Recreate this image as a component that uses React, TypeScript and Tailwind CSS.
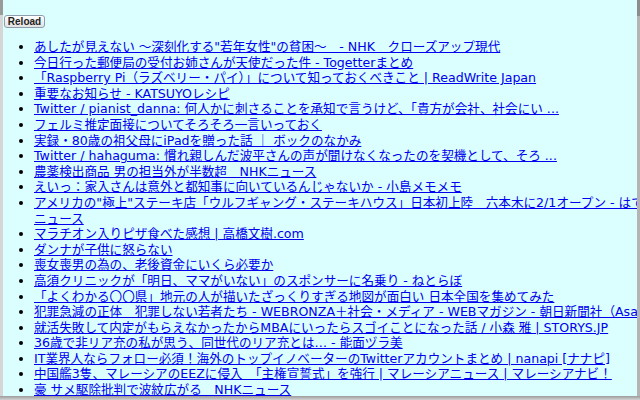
import React from 'react';

// wrap: only the one long title folds onto a second line in the reference
const titles: { text: string; wrap?: boolean }[] = [
  { text: 'あしたが見えない ～深刻化する"若年女性"の貧困～　- NHK　クローズアップ現代' },
  { text: '今日行った郵便局の受付お姉さんが天使だった件 - Togetterまとめ' },
  { text: '「Raspberry Pi（ラズベリー・パイ）」について知っておくべきこと | ReadWrite Japan' },
  { text: '重要なお知らせ - KATSUYOレシピ' },
  { text: 'Twitter / pianist_danna: 何人かに刺さることを承知で言うけど、「貴方が会社、社会にい ...' },
  { text: 'フェルミ推定面接についてそろそろ一言いっておく' },
  { text: '実録・80歳の祖父母にiPadを贈った話 ｜ ボックのなかみ' },
  { text: 'Twitter / hahaguma: 慣れ親しんだ波平さんの声が聞けなくなったのを契機として、そろ ...' },
  { text: '農薬検出商品 男の担当外が半数超　NHKニュース' },
  { text: 'えいっ：家入さんは意外と都知事に向いているんじゃないか - 小島メモメモ' },
  {
    text: 'アメリカの"極上"ステーキ店「ウルフギャング・ステーキハウス」日本初上陸　六本木に2/1オープン - はてなニュース',
    wrap: true,
  },
  { text: 'マラチオン入りピザ食べた感想 | 高橋文樹.com' },
  { text: 'ダンナが子供に怒らない' },
  { text: '喪女喪男の為の、老後資金にいくら必要か' },
  { text: '高須クリニックが「明日、ママがいない」のスポンサーに名乗り - ねとらぼ' },
  { text: '「よくわかる〇〇県」地元の人が描いたざっくりすぎる地図が面白い 日本全国を集めてみた' },
  { text: '犯罪急減の正体　犯罪しない若者たち - WEBRONZA＋社会・メディア - WEBマガジン - 朝日新聞社（Asahi' },
  { text: '就活失敗して内定がもらえなかったからMBAにいったらスゴイことになった話 / 小森 雅 | STORYS.JP' },
  { text: '36歳で非リア充の私が思う、同世代のリア充とは… - 能面ヅラ美' },
  { text: 'IT業界人ならフォロー必須！海外のトップイノベーターのTwitterアカウントまとめ | nanapi [ナナピ]' },
  { text: '中国艦3隻、マレーシアのEEZに侵入　「主権宣誓式」を強行 | マレーシアニュース | マレーシアナビ！' },
  { text: '豪 サメ駆除批判で波紋広がる　NHKニュース' },
];

export default function App() {
  return (
    <div className="w-[640px] h-[400px] flex flex-col bg-[#c4c4c4] overflow-hidden">
      <div className="flex flex-1 min-h-0">
        {/* left window edge */}
        <div className="w-[3px] flex flex-col">
          <div className="h-[15px] bg-[#9a9a9a]" />
          <div className="flex-1 bg-[#d6d6d6]" />
        </div>

        <div className="flex-1 min-w-0 overflow-hidden bg-[#dbffff] font-['DejaVu_Sans','Noto_Sans_CJK_JP',sans-serif]">
          <div className="w-[660px] pt-[15px] pl-[1px]">
            <button className="block w-[41px] h-[13px] rounded-[3px] border border-[#8e9cb0] bg-gradient-to-b from-white to-[#e2e2e2] text-[10px] leading-none font-['Liberation_Sans',sans-serif] font-bold text-[#222]">
              Reload
            </button>

            <ul className="list-disc mt-[11px] pl-[30px] text-[12.6px] leading-[15.6px]">
              {titles.map((t, i) => (
                <li
                  key={i}
                  className={t.wrap ? 'marker:text-black' : 'marker:text-black whitespace-nowrap'}
                >
                  <a href="#" className="text-[#0000ee] underline">
                    {t.text}
                  </a>
                </li>
              ))}
            </ul>
          </div>
        </div>

        {/* right window edge */}
        <div className="w-[3px] flex flex-col">
          <div className="h-[16px] bg-[#8c8c8c]" />
          <div className="flex-1 bg-[#b4b4b4]" />
        </div>
      </div>
      <div className="h-[4px] bg-gradient-to-b from-[#9c9c9c] to-[#d2d2d2]" />
    </div>
  );
}
